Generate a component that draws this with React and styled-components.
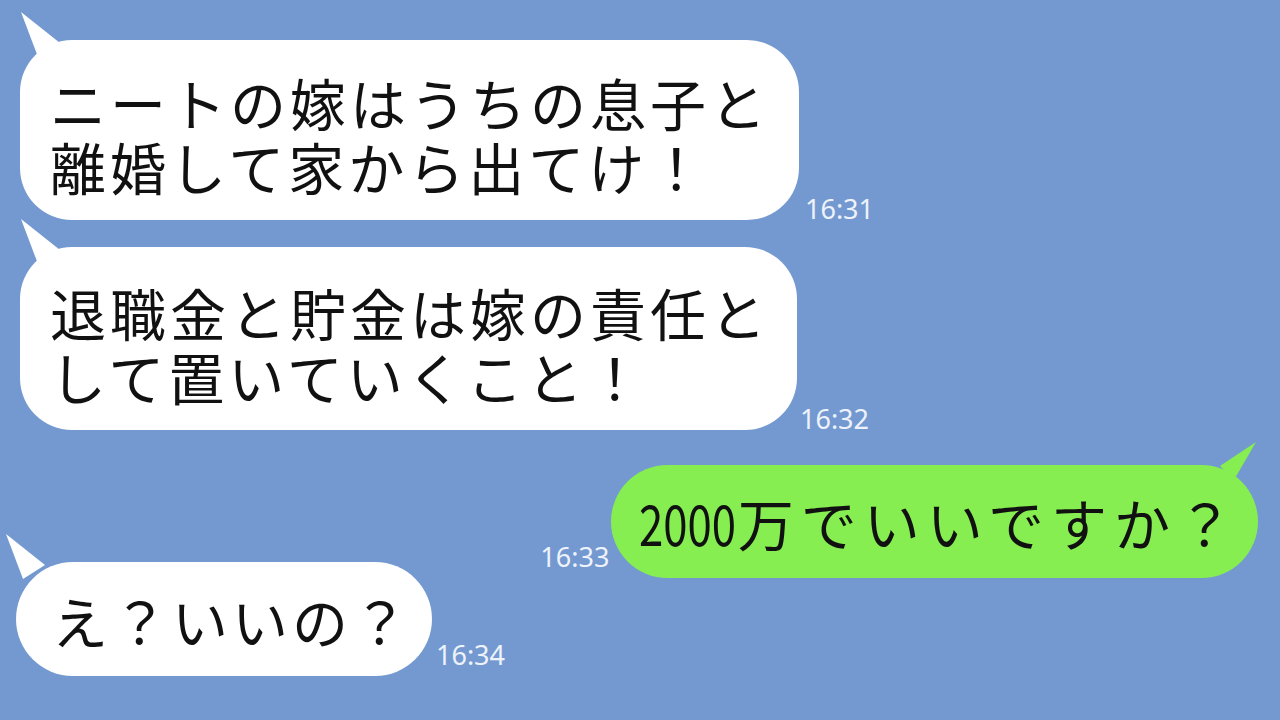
import React from 'react';
import styled, { createGlobalStyle, css } from 'styled-components';

const GlobalStyle = createGlobalStyle`
  html, body {
    margin: 0;
    padding: 0;
    background: #7399d0;
  }
  body {
    font-family: "Noto Sans CJK JP", "Noto Sans", sans-serif;
  }
`;

const messages = [
  { id: 1, mine: false, time: '16:31', lines: ['ニートの嫁はうちの息子と', '離婚して家から出てけ！'] },
  { id: 2, mine: false, time: '16:32', lines: ['退職金と貯金は嫁の責任と', 'して置いていくこと！'] },
  { id: 3, mine: true, time: '16:33', digits: '2000', lines: ['万でいいですか？'] },
  { id: 4, mine: false, time: '16:34', lines: ['え？いいの？'] },
];

const App = () => (
  <>
    <GlobalStyle />
    <Screen>
      {messages.map((m) => (
        <Row key={m.id} mine={m.mine} variant={m.id}>
          {m.mine && <Time variant={m.id}>{m.time}</Time>}
          <Bubble mine={m.mine} variant={m.id}>
            {m.lines.map((line, i) => (
              <Line key={i}>
                {i === 0 && m.digits && <Digits>{m.digits}</Digits>}
                {line}
              </Line>
            ))}
          </Bubble>
          {!m.mine && <Time variant={m.id}>{m.time}</Time>}
        </Row>
      ))}
    </Screen>
  </>
);

export default App;

const rowSpacing = {
  1: css`
    margin-top: 40px;
    padding-left: 20px;
  `,
  2: css`
    margin-top: 27px;
    padding-left: 20px;
  `,
  3: css`
    margin-top: 35px;
    padding-right: 22px;
  `,
  4: css`
    margin-top: -16px;
    padding-left: 16px;
  `,
};

const bubblePadding = {
  1: css`
    padding: 30px 29px 22px 30px;
    border-radius: 52px;
  `,
  2: css`
    padding: 33px 27px 22px 30px;
    border-radius: 52px;
  `,
  3: css`
    padding: 25px 18px 24px 28px;
    border-radius: 57px;
    letter-spacing: 7px;
  `,
  4: css`
    padding: 26px 20px 24px 36px;
    border-radius: 57px;
  `,
};

const timeOffset = {
  1: css`
    margin: 0 0 -4px 6px;
  `,
  2: css`
    margin: 0 0 -4px 3px;
  `,
  3: css`
    margin: 0 2px 6px 0;
  `,
  4: css`
    margin: 0 0 6px 4px;
  `,
};

const Screen = styled.div`
  width: 1280px;
  height: 720px;
  overflow: hidden;
  background: #7399d0;
  display: flex;
  flex-direction: column;
`;

const Row = styled.div`
  display: flex;
  align-items: flex-end;
  justify-content: ${({ mine }) => (mine ? 'flex-end' : 'flex-start')};
  ${({ variant }) => rowSpacing[variant]}
`;

const Bubble = styled.div`
  position: relative;
  background: ${({ mine }) => (mine ? '#86ee50' : '#ffffff')};
  color: #111;
  font-size: 56px;
  line-height: 64px;
  letter-spacing: 4px;
  white-space: nowrap;
  ${({ variant }) => bubblePadding[variant]}

  &::before {
    content: '';
    position: absolute;
    width: 50px;
    height: 50px;
    background: inherit;
    ${({ mine, variant }) =>
      mine
        ? css`
            right: 0;
            top: -26px;
            clip-path: polygon(48px 3px, 12px 27px, 26px 41px);
          `
        : css`
            left: ${variant === 4 ? '-11px' : '0'};
            top: -30px;
            clip-path: polygon(1px 2px, 18px 47px, 40px 33px);
          `}
  }
`;

const Line = styled.span`
  display: block;
`;

const Digits = styled.span`
  display: inline-block;
  letter-spacing: 0;
  transform: scaleX(0.78);
  transform-origin: left center;
  margin-right: -26px;
`;

const Time = styled.span`
  color: #eef3fb;
  font-family: "Noto Sans", "Open Sans", sans-serif;
  font-size: 27px;
  line-height: 30px;
  ${({ variant }) => timeOffset[variant]}
`;
